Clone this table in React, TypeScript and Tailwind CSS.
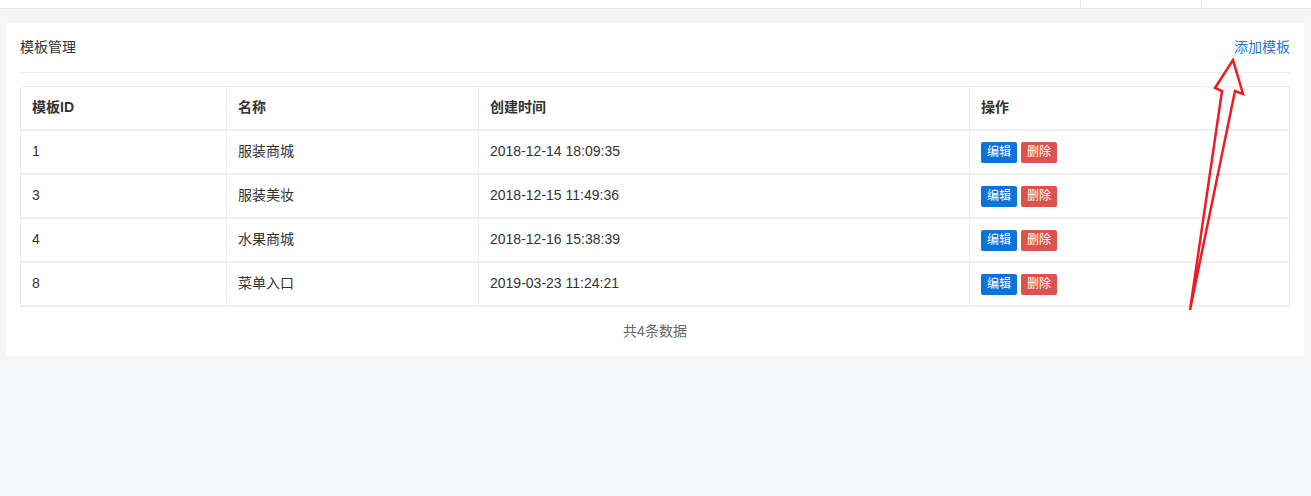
import React from "react";

const rows = [
  { id: 1, name: "服装商城", time: "2018-12-14 18:09:35" },
  { id: 3, name: "服装美妆", time: "2018-12-15 11:49:36" },
  { id: 4, name: "水果商城", time: "2018-12-16 15:38:39" },
  { id: 8, name: "菜单入口", time: "2019-03-23 11:24:21" },
];

const font = {
  fontFamily: '"Liberation Sans", Arial, "Noto Sans CJK SC", sans-serif',
};

const App = () => {
  return (
    <div
      className="relative w-[1311px] h-[496px] bg-[#f5f6f8] text-[14px] text-[#333] overflow-hidden"
      style={font}
    >
      {/* top bar */}
      <div className="flex h-[9px] bg-white border-b border-[#e8e8e8]">
        <div className="flex-1" />
        <div className="w-[121px] border-l border-[#e8e8e8]" />
        <div className="w-[110px] border-l border-[#e8e8e8]" />
      </div>

      <div className="mt-[14px] ml-[6px] mr-[7px] bg-white px-[14px]">
        <div className="flex h-[50px] items-center justify-between border-b border-[#eeeeee]">
          <span>模板管理</span>
          <a className="text-[#1a7bd6] cursor-pointer">添加模板</a>
        </div>

        <table className="mt-[13px] w-full border-collapse border border-[#eeeeee]">
          <thead>
            <tr className="h-[43px]">
              <th className="w-[206px] border border-b-2 border-[#eeeeee] px-[11px] text-left font-bold">
                模板ID
              </th>
              <th className="w-[252px] border border-b-2 border-[#eeeeee] px-[11px] text-left font-bold">
                名称
              </th>
              <th className="w-[491px] border border-b-2 border-[#eeeeee] px-[11px] text-left font-bold">
                创建时间
              </th>
              <th className="border border-b-2 border-[#eeeeee] px-[11px] text-left font-bold">
                操作
              </th>
            </tr>
          </thead>
          <tbody>
            {rows.map((r) => (
              <tr key={r.id} className="h-[44px]">
                <td className="border border-b-2 border-[#eeeeee] px-[11px]">{r.id}</td>
                <td className="border border-b-2 border-[#eeeeee] px-[11px]">{r.name}</td>
                <td className="border border-b-2 border-[#eeeeee] px-[11px]">{r.time}</td>
                <td className="border border-b-2 border-[#eeeeee] px-[11px]">
                  <div className="flex gap-[4px] pt-[1px]">
                    <button className="h-[21px] w-[36px] rounded-[2px] bg-[#0b74d9] text-[12px] leading-[21px] text-white">
                      编辑
                    </button>
                    <button className="h-[21px] w-[36px] rounded-[2px] bg-[#d9534f] text-[12px] leading-[21px] text-white">
                      删除
                    </button>
                  </div>
                </td>
              </tr>
            ))}
          </tbody>
        </table>

        <div className="flex h-[49px] items-center justify-center text-[14px] text-[#666]">
          共4条数据
        </div>
      </div>

      {/* annotation arrow */}
      <svg
        className="pointer-events-none absolute left-0 top-0"
        width="1311"
        height="496"
        viewBox="0 0 1311 496"
      >
        <polygon
          points="1233,60 1243,94 1235,91 1190,310 1222,91 1215,88"
          fill="none"
          stroke="#ec1c24"
          strokeWidth="2.5"
          strokeLinejoin="miter"
        />
      </svg>
    </div>
  );
};

export default App;
